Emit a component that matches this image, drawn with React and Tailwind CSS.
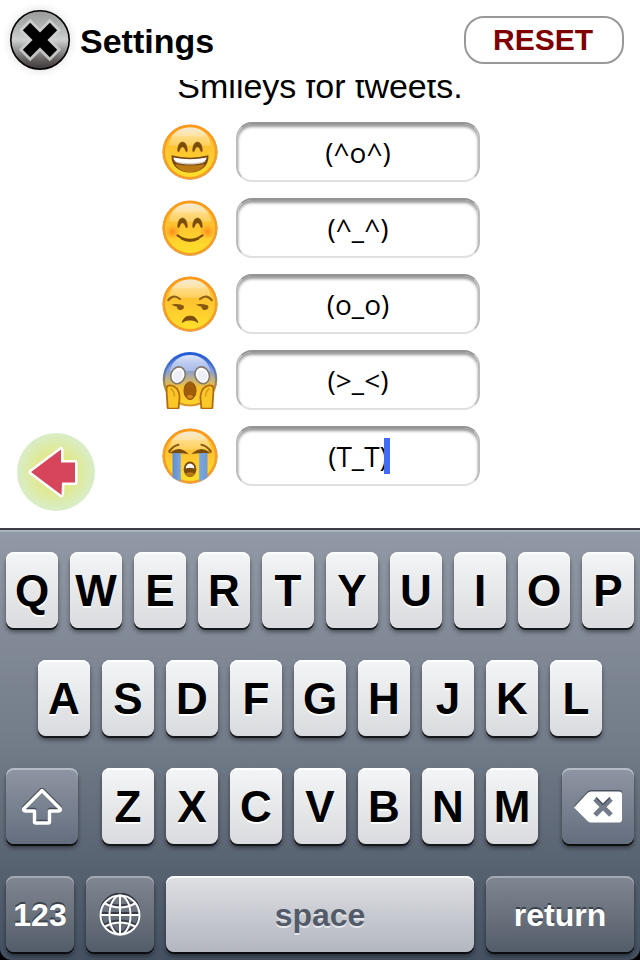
import { useState } from 'react'

const FACE_LABELS = ['Grinning', 'Smiling', 'Unamused', 'Screaming', 'Crying']
const DEFAULTS = ['(^o^)', '(^_^)', '(o_o)', '(>_<)', '(T_T)']

const BROWN = '#7a4c0c'

const LIGHT_KEY =
  'bg-linear-to-b from-[#f4f5f6] to-[#dadbde] text-black [text-shadow:0_2px_0_#ffffff] shadow-[inset_0_2px_0_#ffffff,0_2px_0_#14171b,0_4px_4px_rgba(0,0,0,0.45)]'
const DARK_KEY =
  'bg-linear-to-b from-[#8f96a3] to-[#646e7e] text-white [text-shadow:0_-2px_0_#3f4650] shadow-[inset_0_2px_0_#b5bcc5,0_2px_0_#0b0d10,0_4px_4px_rgba(0,0,0,0.45)]'
const BOTTOM_KEY =
  'bg-linear-to-b from-[#818792] to-[#535d69] text-white [text-shadow:0_-2px_0_#3a414b] shadow-[inset_0_2px_0_#a3aab3,0_2px_0_#0b0d10,0_4px_4px_rgba(0,0,0,0.45)]'
const SPACE_KEY =
  'bg-linear-to-b from-[#dfe0e4] to-[#b2b6bf] text-[#535b69] [text-shadow:0_2px_0_#e6e8ec] shadow-[inset_0_2px_0_#fafafa,0_2px_0_#0b0d10,0_4px_4px_rgba(0,0,0,0.45)]'

function Gradients() {
  return (
    <svg className="absolute size-0" aria-hidden="true">
      <defs>
        <linearGradient id="skin" x1="0" y1="0" x2="0" y2="1">
          <stop offset="0" stopColor="#ffb52b" />
          <stop offset="0.5" stopColor="#ffc62f" />
          <stop offset="1" stopColor="#ffdf2b" />
        </linearGradient>
        <linearGradient id="rim" x1="0" y1="0" x2="0" y2="1">
          <stop offset="0" stopColor="#fb9a1c" />
          <stop offset="1" stopColor="#f59f27" />
        </linearGradient>
        <linearGradient id="gloss" x1="0" y1="0" x2="0" y2="1">
          <stop offset="0" stopColor="#f3ead6" />
          <stop offset="0.45" stopColor="#ffe3a0" />
          <stop offset="0.5" stopColor="#ffdb85" />
          <stop offset="1" stopColor="#ffcf5c" />
        </linearGradient>
        <linearGradient id="fear" x1="0" y1="0" x2="0" y2="1">
          <stop offset="0" stopColor="#2a62dc" />
          <stop offset="0.3" stopColor="#7f9ce0" />
          <stop offset="0.5" stopColor="#c3b183" />
          <stop offset="0.68" stopColor="#fbc327" />
          <stop offset="1" stopColor="#fcd22c" />
        </linearGradient>
        <linearGradient id="fearRim" x1="0" y1="0" x2="0" y2="1">
          <stop offset="0" stopColor="#1f5bd8" />
          <stop offset="0.35" stopColor="#5579bd" />
          <stop offset="0.6" stopColor="#a58a4e" />
          <stop offset="1" stopColor="#dc9420" />
        </linearGradient>
        <linearGradient id="fearGloss" x1="0" y1="0" x2="0" y2="1">
          <stop offset="0" stopColor="#dfe5f4" />
          <stop offset="0.5" stopColor="#bccaf0" />
          <stop offset="1" stopColor="#a9bbe6" />
        </linearGradient>
        <linearGradient id="tear" x1="0" y1="0" x2="1" y2="0">
          <stop offset="0" stopColor="#5f8fd0" />
          <stop offset="0.4" stopColor="#8fb5e8" />
          <stop offset="1" stopColor="#6f9bd6" />
        </linearGradient>
        <linearGradient id="metal" x1="0" y1="0" x2="0" y2="1">
          <stop offset="0" stopColor="#999b9a" />
          <stop offset="0.3" stopColor="#b4b6b5" />
          <stop offset="0.5" stopColor="#cfd1d0" />
          <stop offset="0.62" stopColor="#a5a5a5" />
          <stop offset="0.85" stopColor="#5f5b5a" />
          <stop offset="1" stopColor="#3c3635" />
        </linearGradient>
        <radialGradient id="blush">
          <stop offset="0" stopColor="#ff8a1c" />
          <stop offset="1" stopColor="#ff9a20" stopOpacity="0" />
        </radialGradient>
        <radialGradient id="halo">
          <stop offset="0" stopColor="#e8ea6e" />
          <stop offset="0.5" stopColor="#e0e990" />
          <stop offset="1" stopColor="#d8edc8" />
        </radialGradient>
      </defs>
    </svg>
  )
}

function Head() {
  return (
    <>
      <circle cx="28" cy="28.3" r="27.6" fill="#d9a56a" />
      <circle cx="28" cy="27.8" r="27.4" fill="url(#rim)" />
      <circle cx="28" cy="27.9" r="25" fill="url(#skin)" />
      <path d="M7 20C9 9 18 3.500 28 3.500S47 9 49 20q.4 1.800-1.500 1.800h-39Q6.600 21.800 7 20z" fill="url(#gloss)" />
    </>
  )
}

function ArchedEyes() {
  return (
    <path
      d="M15.700 27C15.500 22 17.500 18 20.500 18s5 4 4.800 9c-.1 1-1.300.9-1.700-.1-.7-2.500-1.600-4-3.100-4s-2.400 1.500-3.100 4c-.4 1-1.600 1.100-1.700.1zM30.700 27c-.2-5 1.800-9 4.800-9s5 4 4.800 9c-.1 1-1.300.9-1.700-.1-.7-2.500-1.600-4-3.100-4s-2.400 1.500-3.100 4c-.4 1-1.600 1.100-1.700.1z"
      fill={BROWN}
      stroke={BROWN}
      strokeWidth="0.5"
    />
  )
}

function Face({ kind }) {
  return (
    <svg viewBox="0 -1 56 58" className="h-[58px] w-14 shrink-0" aria-hidden="true">
      {kind === 'Grinning' && (
        <>
          <Head />
          <ArchedEyes />
          <path d="M9.500 31.300Q28 36 46.500 31.300C47 42 39 48.500 28 48.500S9 42 9.500 31.300z" fill="#784610" />
          <path d="M13 40Q28 43 43 40C40 45.500 35 48 28 48S16 45.500 13 40z" fill="#bb7a14" />
          <path d="M11.300 33.500Q28 37 44.700 33.500C44.500 38 38 40.300 28 40.300S11.500 38 11.300 33.500z" fill="#fff" />
          <path d="M12 37q16 4 32 0c-2.500 2.500-8 3.300-16 3.300S14.500 39.500 12 37z" fill="#d8d0c4" />
        </>
      )}
      {kind === 'Smiling' && (
        <>
          <Head />
          <circle cx="10.500" cy="31.700" r="8" fill="url(#blush)" />
          <circle cx="45.500" cy="31.700" r="8" fill="url(#blush)" />
          <ArchedEyes />
          <path d="M15.500 35.300Q28 44.500 40.500 35.300" fill="none" stroke={BROWN} strokeWidth="2.200" strokeLinecap="round" />
          <path d="M19 38.500Q28 43.500 37 38.500" fill="none" stroke={BROWN} strokeWidth="2" />
        </>
      )}
      {kind === 'Unamused' && (
        <>
          <Head />
          <path d="M6.300 24.200Q11 17.500 18 23M49.700 24.200Q45 17.500 38 23" fill="none" stroke="#8d6013" strokeWidth="2.200" strokeLinecap="round" />
          <path d="M9.500 28.500Q14.500 27 21 29.200c2 1.500.6 4.600-2.300 4.800-3.200.1-3.700-2-3.700-3.300Q12 30.500 9.500 28.500zM34 28.500Q39 27 45.500 29.200c2 1.500.6 4.600-2.300 4.800-3.200.1-3.700-2-3.700-3.300Q36.500 30.500 34 28.500z" fill="#86580d" />
          <path d="M20.300 46.600C21.500 42 24 40.200 28 40.200s6.500 1.800 7.700 6.400c-2-2-4.600-2.700-7.700-2.700s-5.700.7-7.700 2.700z" fill={BROWN} stroke={BROWN} />
        </>
      )}
      {kind === 'Screaming' && (
        <>
          <circle cx="28" cy="27.200" r="27.300" fill="url(#fearRim)" />
          <circle cx="28" cy="27.400" r="25" fill="url(#fear)" />
          <path d="M7.500 19C10 9 18 3 28 3s18 6 20.500 16z" fill="url(#fearGloss)" />
          <ellipse cx="16" cy="23.300" rx="7" ry="8.600" transform="rotate(22 16 23.300)" fill="#fff" stroke="#81776a" strokeWidth="1.600" />
          <ellipse cx="40.200" cy="23.300" rx="7" ry="8.600" transform="rotate(-22 40.200 23.300)" fill="#fff" stroke="#81776a" strokeWidth="1.600" />
          <ellipse cx="16" cy="24" rx="4.600" ry="6" transform="rotate(22 16 24)" fill="#eeeef6" />
          <ellipse cx="40.200" cy="24" rx="4.600" ry="6" transform="rotate(-22 40.200 24)" fill="#eeeef6" />
          <ellipse cx="28" cy="38.700" rx="6" ry="8.800" fill="#a05c0d" stroke="#8a4e0b" />
          <path d="M24.800 45q3.200-4.500 6.400 0-3.200 3-6.400 0z" fill="#d48a1a" />
          <path d="M4.600 36q.2-2.800 4-2.600c5.400.8 8.400 4.600 8.900 10.600.3 4-.9 7.500-.7 11q0 1.700-1.500 1.700H7q-1.500 0-1.500-1.700C5.500 49 4.400 42 4.600 36z" fill="#fbc728" stroke="#b06c13" strokeWidth="1.800" />
          <path d="M51.400 36q-.2-2.800-4-2.600c-5.400.8-8.400 4.600-8.900 10.600-.3 4 .9 7.500.7 11q0 1.700 1.500 1.700H49q1.500 0 1.500-1.700c0-6 1.100-13 .9-19z" fill="#fbc728" stroke="#b06c13" strokeWidth="1.800" />
          <path d="M9 37q3 2 3.500 7M47 37q-3 2-3.500 7" fill="none" stroke="#dc9a1f" strokeWidth="1.600" strokeLinecap="round" />
        </>
      )}
      {kind === 'Crying' && (
        <>
          <Head />
          <path d="M10.500 25h8.300v28.200q-4.500-1-8.300-3.800zM37.200 25h8.300v24.400q-3.800 2.800-8.300 3.800z" fill="url(#tear)" />
          <path d="M7.200 23.500Q11 18 16.500 16.800M48.800 23.500Q45 18 39.500 16.800" fill="none" stroke="#8a5a10" strokeWidth="2.200" strokeLinecap="round" />
          <path d="M9.500 24.500Q17 18.500 24.700 25.200 17 24 9.500 24.500zM46.500 24.500Q39 18.500 31.300 25.200 39 24 46.500 24.500z" fill={BROWN} stroke={BROWN} strokeWidth="1.300" />
          <ellipse cx="28" cy="41.300" rx="6.300" ry="7.800" fill="#7a4a0c" />
          <path d="M23.600 40.500q.4-4.700 4.400-5 4 .3 4.400 5-4.400-1.400-8.800 0z" fill="#fff" />
          <path d="M23.500 45.500q4.500-2.500 9 0-1.500 3.200-4.500 3.200t-4.500-3.200z" fill="#b97a18" />
        </>
      )}
    </svg>
  )
}

function Key({ label, className, onPress, children }) {
  return (
    <button
      type="button"
      aria-label={label}
      onClick={onPress}
      className={`flex h-[76px] items-center justify-center rounded-lg pt-0.5 font-bold ${className}`}
    >
      {children ?? label}
    </button>
  )
}

function LetterKeys({ letters, onPress }) {
  return letters.split('').map((c) => (
    <Key key={c} label={c} onPress={() => onPress(c)} className={`min-w-0 flex-1 text-[44px] leading-none ${LIGHT_KEY}`} />
  ))
}

function ShiftIcon() {
  const d = 'M20 2.500 38 20.500q1 2.500-1.500 2.500H27.500v10.500q0 1.500-1.500 1.500H14q-1.500 0-1.500-1.500V23H3.500Q1 23 2 20.500z'
  return (
    <svg viewBox="0 0 40 38" className="h-[38px] w-10" fill="none" strokeLinejoin="round" aria-hidden="true">
      <path d={d} stroke="#444b57" strokeWidth="3.500" transform="translate(0 -1.500)" />
      <path d={d} stroke="#fff" strokeWidth="3.500" />
    </svg>
  )
}

function DeleteIcon() {
  return (
    <svg viewBox="0 0 48 34" className="h-[34px] w-12" aria-hidden="true">
      <path d="M0 16 13.500 1.500Q15 0 17 0h28q3 0 3 3v26q0 3-3 3H17q-2 0-3.500-1.500z" fill="#4a5260" />
      <path d="M0 17.500 13.500 3Q15 1.500 17 1.500h28q3 0 3 3v25q0 3-3 3H17q-2 0-3.500-1.500z" fill="#fff" />
      <path d="m21 9 16 16M37 9 21 25" stroke="#737b8b" strokeWidth="5" />
      <path d="m22 7.500 7 7 7-7" fill="none" stroke="#4f5765" strokeWidth="1.500" />
    </svg>
  )
}

function GlobeLines() {
  return (
    <>
      <circle cx="21" cy="22" r="19.500" />
      <ellipse cx="21" cy="22" rx="10.500" ry="19.500" />
      <path d="M21 2.500v39M1.500 22h39M6 10.500q15 8 30 0M6 33.500q15-8 30 0" />
    </>
  )
}

function GlobeIcon() {
  return (
    <svg viewBox="0 0 42 44" className="h-11 w-[42px]" fill="none" strokeWidth="2" aria-hidden="true">
      <g stroke="#343b45" transform="translate(0 -2)">
        <GlobeLines />
      </g>
      <g stroke="#fff">
        <GlobeLines />
      </g>
    </svg>
  )
}

export default function App() {
  const [smileys, setSmileys] = useState(DEFAULTS)
  const [active, setActive] = useState(4)

  function update(index, value) {
    setSmileys((prev) => prev.map((s, i) => (i === index ? value : s)))
  }

  function type(text) {
    update(active, smileys[active] + text)
  }

  return (
    <div className="flex min-h-screen flex-col bg-white font-['Liberation_Sans',Arial,sans-serif] text-black">
      <Gradients />

      {/* Title bar */}
      <header className="flex h-20 items-center justify-between px-2.5 pr-4">
        <div className="flex items-center gap-2.5">
          <button type="button" aria-label="Close" className="size-[60px] rounded-full shadow-[0_0_10px_rgba(0,0,0,0.15)]">
            <svg viewBox="0 0 60 60" className="size-full" aria-hidden="true">
              <circle cx="30" cy="30" r="29.200" fill="url(#metal)" stroke="#000" strokeWidth="1.600" />
              <path d="M14.500 14.500 45.500 45.500M45.500 14.500 14.500 45.500" stroke="#d0d0d0" strokeOpacity="0.85" strokeWidth="16" />
              <path d="M16.500 16.500 43.500 43.500M43.500 16.500 16.500 43.500" stroke="#000" strokeWidth="10.500" />
            </svg>
          </button>
          <h1 className="pt-0.5 text-[34px] leading-10 font-bold">Settings</h1>
        </div>
        <button
          type="button"
          onClick={() => setSmileys(DEFAULTS)}
          className="h-12 w-40 rounded-[20px] border-2 border-[#999999] pr-0.5 text-[30px] leading-none font-bold text-[#800000]"
        >
          RESET
        </button>
      </header>

      {/* Scrolled settings list */}
      <main className="relative flex-1 overflow-hidden">
        <h2 className="-mt-3.5 text-center text-[34px] leading-10">Smileys for tweets.</h2>
        <div className="mt-4 flex flex-col items-center gap-4 pl-0.5">
          {FACE_LABELS.map((name, i) => (
            <label key={name} className="flex items-center gap-[18px]">
              <Face kind={name} />
              <span className="relative">
                <input
                  type="text"
                  aria-label={`${name} smiley`}
                  value={smileys[i]}
                  onChange={(e) => update(i, e.target.value)}
                  onFocus={() => setActive(i)}
                  className="block h-[60px] w-[244px] rounded-2xl border-2 border-t-[#949494] border-r-[#bdbdbd] border-b-[#e0e0e0] border-l-[#bdbdbd] bg-white text-center font-['Open_Sans','Liberation_Sans',sans-serif] text-[28px] caret-[#426bf2] shadow-[inset_0_3px_3px_rgba(0,0,0,0.4)] outline-none"
                />
                {active === i && <span className="absolute top-3 left-[148px] h-9 w-1.5 bg-[#426bf2]" />}
              </span>
            </label>
          ))}
        </div>
        <button type="button" aria-label="Back" className="absolute bottom-[17px] left-[17px] size-[78px]">
          <svg viewBox="0 0 78 78" className="size-full" aria-hidden="true">
            <circle cx="39" cy="39" r="39" fill="url(#halo)" />
            <path
              d="M14 39 44 16.500V29.500H58V49.500H45L44.500 62z"
              fill="#d64559"
              stroke="#fff"
              strokeWidth="5"
              strokeLinejoin="round"
              paintOrder="stroke"
            />
          </svg>
        </button>
      </main>

      {/* Keyboard */}
      <div className="bg-black">
        <div className="flex flex-col gap-8 rounded-b-xl border-t-2 border-[#3b3e47] bg-linear-to-b from-[#9299a6] via-[#727b88] to-[#445060] px-1.5 pt-[22px] pb-2 shadow-[inset_0_2px_0_#aab2bd]">
          <div className="flex gap-3">
            <LetterKeys letters="QWERTYUIOP" onPress={type} />
          </div>
          <div className="flex gap-3 px-8">
            <LetterKeys letters="ASDFGHJKL" onPress={type} />
          </div>
          <div className="flex gap-6">
            <Key label="Shift" className={`w-[72px] ${DARK_KEY}`}>
              <ShiftIcon />
            </Key>
            <div className="flex flex-1 gap-3">
              <LetterKeys letters="ZXCVBNM" onPress={type} />
            </div>
            <Key label="Delete" className={`w-[72px] ${DARK_KEY}`} onPress={() => update(active, smileys[active].slice(0, -1))}>
              <DeleteIcon />
            </Key>
          </div>
          <div className="flex gap-3">
            <Key label="123" className={`w-[68px] text-[32px] ${BOTTOM_KEY}`} />
            <Key label="Next keyboard" className={`w-[68px] ${BOTTOM_KEY}`}>
              <GlobeIcon />
            </Key>
            <Key label="space" className={`flex-1 text-[32px] ${SPACE_KEY}`} onPress={() => type(' ')} />
            <Key label="return" className={`w-[148px] text-[32px] ${BOTTOM_KEY}`} />
          </div>
        </div>
      </div>
    </div>
  )
}
